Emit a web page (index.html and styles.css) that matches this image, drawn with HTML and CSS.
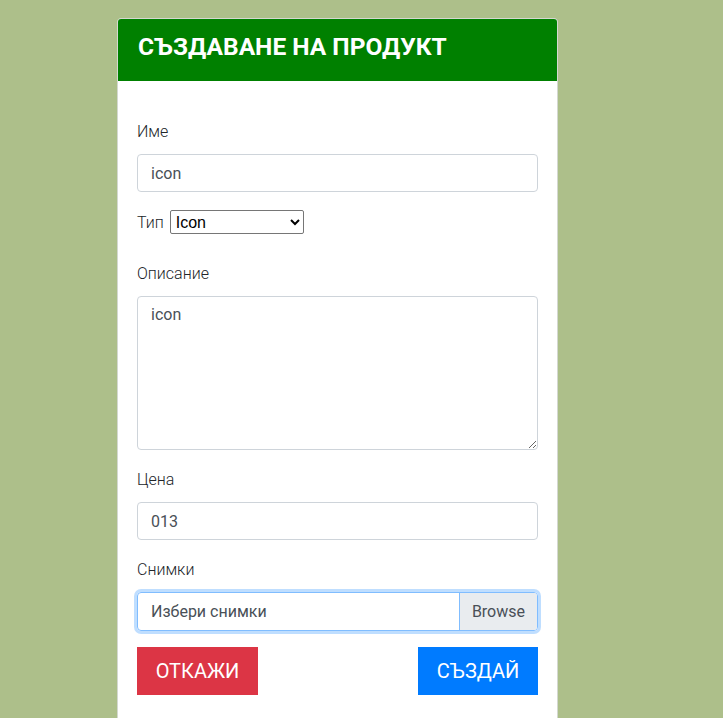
FILE: index.html
```html
<!DOCTYPE html>
<html lang="bg">
<head>
<meta charset="utf-8">
<title>Създаване на продукт</title>
<link rel="stylesheet" href="styles.css">
</head>
<body>
<div class="card">
  <div class="card-header">СЪЗДАВАНЕ НА ПРОДУКТ</div>
  <form class="card-body">
    <div class="group">
      <label class="lbl">Име</label>
      <input class="ctrl" type="text" value="icon">
    </div>
    <div class="type-row">
      <span class="type-lbl">Тип</span>
      <select class="sel"><option>Icon</option></select>
    </div>
    <div class="group">
      <label class="lbl">Описание</label>
      <textarea class="ctrl area">icon</textarea>
    </div>
    <div class="group">
      <label class="lbl">Цена</label>
      <input class="ctrl" type="text" value="013">
    </div>
    <div class="group">
      <label class="lbl">Снимки</label>
      <div class="file">
        <span class="file-text">Избери снимки</span>
        <span class="file-btn">Browse</span>
      </div>
    </div>
    <div class="actions">
      <button type="button" class="btn btn-red">ОТКАЖИ</button>
      <button type="button" class="btn btn-blue">СЪЗДАЙ</button>
    </div>
  </form>
</div>
</body>
</html>
```
FILE: styles.css
```css
html, body {
  margin: 0;
  padding: 0;
  background: #adbf8a;
  font-family: Roboto, "Liberation Sans", Arial, sans-serif;
  height: 100%;
  overflow: hidden;
}
.card {
  width: 439px;
  margin: 18px 0 0 117px;
  background: #fff;
  border: 1px solid #d4d8d0;
  border-radius: 4px;
  overflow: hidden;
  min-height: 760px;
}
.card-header {
  background: #008000;
  color: #fff;
  font-weight: 700;
  font-size: 24.5px;
  height: 62px;
  line-height: 56px;
  padding: 0 20px;
  letter-spacing: 0;
}
.card-body {
  display: flex;
  flex-direction: column;
  padding: 39px 19px 0 19px;
}
.group {
  display: flex;
  flex-direction: column;
}
.lbl {
  font-size: 16px;
  font-weight: 300;
  color: #212529;
  line-height: 24px;
  margin-bottom: 10px;
}
.ctrl {
  box-sizing: border-box;
  width: 100%;
  height: 38px;
  border: 1px solid #ced4da;
  border-radius: 4px;
  padding: 6px 13px;
  font-family: Roboto, "Liberation Sans", Arial, sans-serif;
  font-size: 16px;
  color: #495057;
  background: #fff;
  margin: 0;
}
.area {
  height: 154px;
  padding-top: 8px;
  resize: vertical;
}
.type-row {
  display: flex;
  align-items: center;
  margin: 18px 0 28px 0;
  height: 24px;
}
.type-lbl {
  font-size: 16px;
  font-weight: 300;
  color: #212529;
  margin-right: 6px;
}
.sel {
  width: 134px;
  height: 24px;
  font-family: "Liberation Sans", Arial, sans-serif;
  font-size: 16px;
  color: #000;
  border: 1px solid #767676;
  border-radius: 2px;
  background: #fff;
  padding: 0 1px;
}
.group + .group {
  margin-top: 18px;
}
.file {
  display: flex;
  height: 39px;
  box-sizing: border-box;
  border: 1px solid #80bdff;
  border-radius: 4px;
  box-shadow: 0 0 0 3px rgba(0, 123, 255, 0.25);
  overflow: hidden;
}
.file-text {
  flex: 1;
  display: flex;
  align-items: center;
  padding-left: 13px;
  font-size: 16px;
  color: #495057;
}
.file-btn {
  display: flex;
  align-items: center;
  padding: 0 12px;
  background: #e9ecef;
  border-left: 1px solid #80bdff;
  font-size: 16px;
  color: #495057;
}
.actions {
  display: flex;
  justify-content: space-between;
  margin-top: 16px;
}
.btn {
  border: 0;
  border-radius: 0;
  height: 48px;
  padding: 0 18px;
  font-family: Roboto, "Liberation Sans", Arial, sans-serif;
  font-size: 20px;
  color: #fff;
  cursor: pointer;
}
.btn-red {
  background: #dc3545;
  width: 121px;
}
.btn-blue {
  background: #007bff;
  width: 120px;
}
```
